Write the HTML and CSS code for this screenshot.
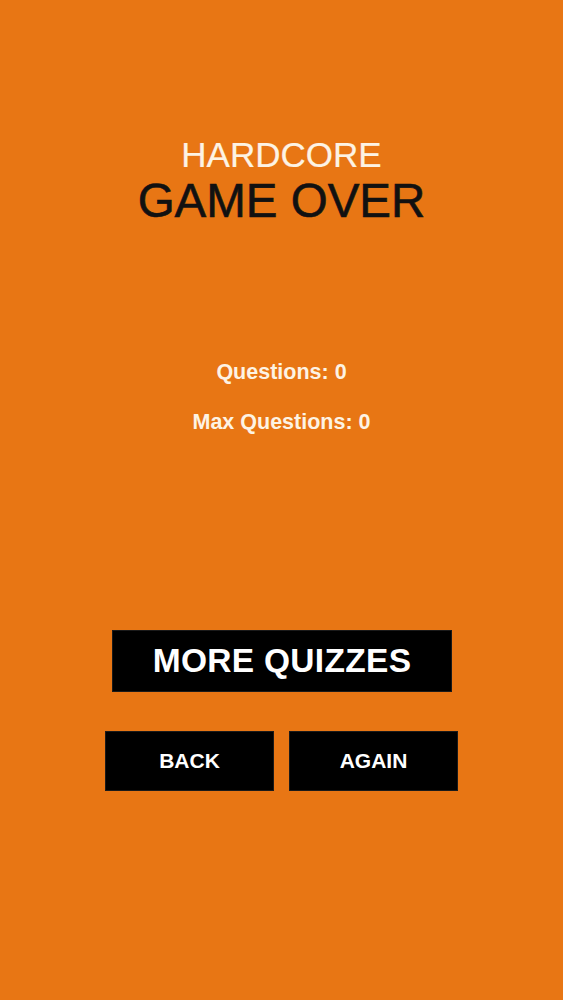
FILE: index.html
```html
<!DOCTYPE html>
<html lang="en">
<head>
  <meta charset="UTF-8">
  <title>Hardcore - Game Over</title>
  <link rel="stylesheet" href="styles.css">
</head>
<body>
  <div class="screen">
    <div class="title">
      <div class="mode">HARDCORE</div>
      <div class="heading">GAME OVER</div>
    </div>

    <div class="stats">
      <div class="stat">Questions: 0</div>
      <div class="stat">Max Questions: 0</div>
    </div>

    <div class="actions">
      <button class="btn btn-wide">MORE QUIZZES</button>
      <div class="row">
        <button class="btn btn-small">BACK</button>
        <button class="btn btn-small">AGAIN</button>
      </div>
    </div>
  </div>
</body>
</html>
```

FILE: styles.css
```css
html, body { margin: 0; padding: 0; }
body {
  background: #e87614;
  font-family: "Liberation Sans", Arial, sans-serif;
  color: #fdf3e4;
  min-height: 1000px;
}
.screen { padding-top: 135px; text-align: center; }
.mode { font-size: 35px; line-height: 40px; -webkit-text-stroke: 0.2px #fdf3e4; }
.heading { font-size: 47.5px; line-height: 52px; color: #111; -webkit-text-stroke: 0.6px #111; }
.stats { margin-top: 132px; }
.stat { font-size: 21.5px; line-height: 26px; font-weight: bold; }
.stat + .stat { margin-top: 24px; }
.actions {
  margin-top: 195px;
  display: flex; flex-direction: column; align-items: center;
}
.btn {
  background: #000; color: #fff; border: 1px solid #1a1a1a;
  font-family: "Liberation Sans", Arial, sans-serif; font-weight: bold;
  display: flex; align-items: center; justify-content: center;
  padding: 0; margin: 0; box-sizing: border-box;
}
.btn-wide { width: 340px; height: 62px; font-size: 33.5px; letter-spacing: 0.3px; margin-left: 1px; }
.row { display: flex; gap: 15px; margin-top: 39px; }
.btn-small { width: 169px; height: 60px; font-size: 21px; }
```
